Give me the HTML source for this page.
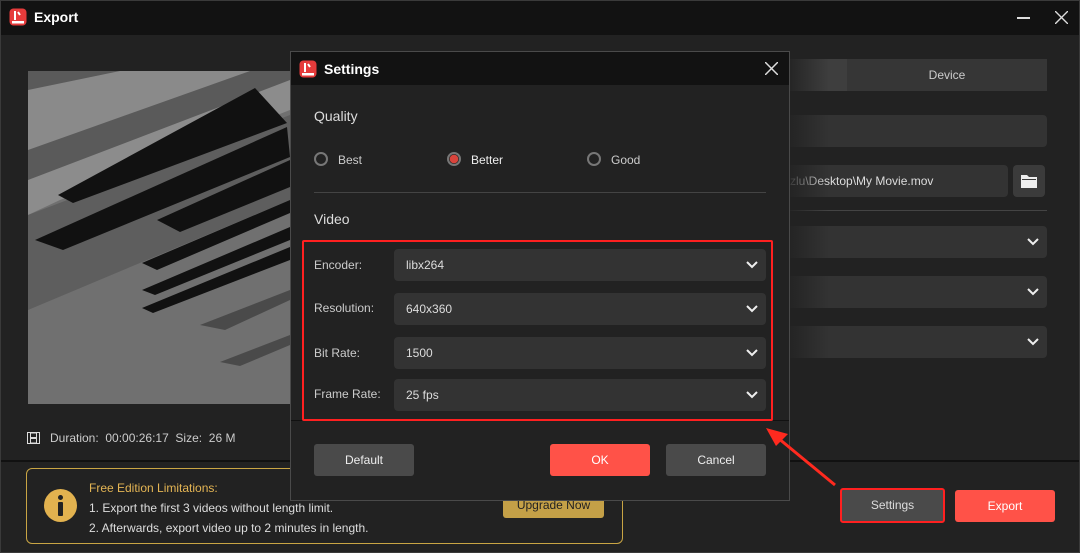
<!DOCTYPE html>
<html><head><meta charset="utf-8"><style>
*{margin:0;padding:0;box-sizing:border-box}
body{width:1080px;height:553px;background:#222;font-family:"Liberation Sans",Arial,sans-serif;color:#ddd;position:relative;overflow:hidden;font-size:12px}
.a{position:absolute}
.dd{position:absolute;background:#333;border-radius:4px}
.chev{position:absolute;right:8px;top:50%;margin-top:-5px}
.btn{position:absolute;border-radius:3px;text-align:center;color:#eee;font-size:12px}
</style></head><body>
<div class="a" style="left:0;top:0;width:1080px;height:553px;border:1px solid #3a3a3a"></div>
<div class="a" style="left:1px;top:1px;width:1078px;height:34px;background:#121212"></div>
<svg class="a" style="left:9px;top:8px" width="18" height="18" viewBox="0 0 18 18"><rect x="0.5" y="0.5" width="17" height="17" rx="4" fill="#e53b3b"/><path d="M6 3v9M9 4l2 3" stroke="#fff" stroke-width="2"/><rect x="3" y="13" width="12" height="2.5" fill="#fff"/></svg>
<div class="a" style="left:34px;top:9px;font-size:14px;font-weight:bold;color:#fff">Export</div>
<div class="a" style="left:1017px;top:17px;width:13px;height:1.5px;background:#ddd"></div>
<svg class="a" style="left:1055px;top:11px" width="13" height="13"><path d="M0 0L13 13M13 0L0 13" stroke="#ddd" stroke-width="1.4"/></svg>
<svg class="a" style="left:28px;top:71px" width="262" height="333" viewBox="28 71 262 333">
<rect x="28" y="71" width="262" height="333" fill="#707070"/>
<polygon points="28,71 290,71 290,100 28,200" fill="#5a5a5a"/>
<polygon points="28,90 120,71 250,71 28,150" fill="#8a8a8a"/>
<polygon points="28,180 290,80 290,110 60,200 28,215" fill="#8c8c8c"/>
<polygon points="28,215 290,115 290,200 28,310" fill="#5e5e5e"/>
<polygon points="58,195 255,88 287,123 73,203" fill="#111"/>
<polygon points="35,240 287,127 290,157 63,250" fill="#111"/>
<polygon points="157,220 290,160 290,187 180,232" fill="#111"/>
<polygon points="142,263 290,200 290,213 157,270" fill="#111"/>
<polygon points="142,290 290,227 290,240 155,295" fill="#111"/>
<polygon points="142,308 290,247 290,260 153,313" fill="#111"/>
<polygon points="200,325 290,290 290,300 225,330" fill="#4a4a4a"/>
<polygon points="220,362 290,335 290,345 240,366" fill="#4a4a4a"/>
</svg>
<svg class="a" style="left:27px;top:432px" width="13" height="12"><rect x="0.5" y="0.5" width="12" height="11" fill="none" stroke="#ddd"/><rect x="3" y="0" width="7" height="12" fill="#ddd"/><rect x="4" y="1.5" width="5" height="3.5" fill="#222"/><rect x="4" y="7" width="5" height="3.5" fill="#222"/></svg>
<div class="a" style="left:50px;top:431px;color:#ccc">Duration: &nbsp;00:00:26:17 &nbsp;Size: &nbsp;26 M</div>
<div class="a" style="left:1px;top:460px;width:1078px;height:2px;background:#111"></div>
<div class="a" style="left:26px;top:468px;width:597px;height:76px;border:1px solid #c9a544;border-radius:6px"></div>
<div class="a" style="left:44px;top:489px;width:33px;height:33px;border-radius:50%;background:#e2b24f"></div>
<div class="a" style="left:58px;top:495px;width:5px;height:5px;border-radius:50%;background:#222"></div>
<div class="a" style="left:58px;top:502px;width:5px;height:14px;background:#222;border-radius:1px"></div>
<div class="a" style="left:89px;top:481px;color:#e4b554">Free Edition Limitations:</div>
<div class="a" style="left:89px;top:501px;color:#ddd">1. Export the first 3 videos without length limit.</div>
<div class="a" style="left:89px;top:521px;color:#ddd">2. Afterwards, export video up to 2 minutes in length.</div>
<div class="a" style="left:503px;top:494px;width:101px;height:24px;background:#c4a047;border-radius:3px;color:#222;text-align:center;line-height:23px">Upgrade Now</div>
<div class="a" style="left:789px;top:59px;width:58px;height:32px;background:#3e3e3e"></div>
<div class="a" style="left:847px;top:59px;width:200px;height:32px;background:#363636;text-align:center;line-height:32px;color:#ccc">Device</div>
<div class="dd" style="left:780px;top:115px;width:267px;height:32px"></div>
<div class="dd" style="left:780px;top:165px;width:228px;height:32px;line-height:32px;color:#ddd;padding-left:10px">zlu\Desktop\My Movie.mov</div>
<div class="a" style="left:1013px;top:165px;width:32px;height:32px;background:#3b3b3b;border-radius:4px"></div>
<svg class="a" style="left:1021px;top:174px" width="16" height="14"><path d="M0 1h6l2 2h8v11H0z" fill="#eee"/><rect x="1" y="5" width="14" height="1" fill="#3b3b3b"/></svg>
<div class="a" style="left:789px;top:210px;width:258px;height:1px;background:#444"></div>
<div class="dd" style="left:780px;top:226px;width:267px;height:32px"><svg class="chev" width="12" height="9"><path d="M1 2l5 5 5-5" stroke="#eee" stroke-width="2" fill="none"/></svg></div>
<div class="dd" style="left:780px;top:276px;width:267px;height:32px"><svg class="chev" width="12" height="9"><path d="M1 2l5 5 5-5" stroke="#eee" stroke-width="2" fill="none"/></svg></div>
<div class="dd" style="left:780px;top:326px;width:267px;height:32px"><svg class="chev" width="12" height="9"><path d="M1 2l5 5 5-5" stroke="#eee" stroke-width="2" fill="none"/></svg></div>
<div class="a" style="left:789px;top:52px;width:40px;height:320px;background:linear-gradient(90deg,rgba(34,34,34,.9),rgba(34,34,34,0))"></div>
<div class="a" style="left:840px;top:488px;width:105px;height:35px;border:2px solid #ff2020;border-radius:3px;background:#4a4a4a;text-align:center;line-height:31px;color:#ddd">Settings</div>
<div class="btn" style="left:955px;top:490px;width:100px;height:32px;background:#ff5248;line-height:32px;color:#fff">Export</div>
<div class="a" style="left:290px;top:51px;width:500px;height:450px;background:#222;border:1px solid #4a4a4a"></div>
<div class="a" style="left:291px;top:52px;width:498px;height:33px;background:#121212"></div>
<svg class="a" style="left:299px;top:60px" width="18" height="18" viewBox="0 0 18 18"><rect x="0.5" y="0.5" width="17" height="17" rx="4" fill="#e53b3b"/><path d="M6 3v9M9 4l2 3" stroke="#fff" stroke-width="2"/><rect x="3" y="13" width="12" height="2.5" fill="#fff"/></svg>
<div class="a" style="left:324px;top:61px;font-size:14px;font-weight:bold;color:#fff">Settings</div>
<svg class="a" style="left:765px;top:62px" width="13" height="13"><path d="M0 0L13 13M13 0L0 13" stroke="#ddd" stroke-width="1.5"/></svg>
<div class="a" style="left:314px;top:108px;font-size:14px;color:#ddd">Quality</div>
<div class="a" style="left:314px;top:152px;width:14px;height:14px;border:2px solid #777;border-radius:50%"></div>
<div class="a" style="left:338px;top:153px;color:#ccc">Best</div>
<div class="a" style="left:447px;top:152px;width:14px;height:14px;border:2px solid #777;border-radius:50%;background:radial-gradient(circle,#d9443c 4px,transparent 4.5px)"></div>
<div class="a" style="left:471px;top:153px;color:#eee">Better</div>
<div class="a" style="left:587px;top:152px;width:14px;height:14px;border:2px solid #777;border-radius:50%"></div>
<div class="a" style="left:611px;top:153px;color:#ccc">Good</div>
<div class="a" style="left:314px;top:192px;width:452px;height:1px;background:#444"></div>
<div class="a" style="left:314px;top:211px;font-size:14px;color:#ddd">Video</div>
<div class="a" style="left:302px;top:240px;width:471px;height:181px;border:2px solid #ff2020;border-radius:2px"></div>
<div class="a" style="left:314px;top:258px;color:#ccc">Encoder:</div>
<div class="dd" style="left:394px;top:249px;width:372px;height:32px;line-height:32px;padding-left:12px;color:#ddd">libx264<svg class="chev" width="12" height="9"><path d="M1 2l5 5 5-5" stroke="#eee" stroke-width="2" fill="none"/></svg></div>
<div class="a" style="left:314px;top:301px;color:#ccc">Resolution:</div>
<div class="dd" style="left:394px;top:293px;width:372px;height:32px;line-height:32px;padding-left:12px;color:#ddd">640x360<svg class="chev" width="12" height="9"><path d="M1 2l5 5 5-5" stroke="#eee" stroke-width="2" fill="none"/></svg></div>
<div class="a" style="left:314px;top:346px;color:#ccc">Bit Rate:</div>
<div class="dd" style="left:394px;top:337px;width:372px;height:32px;line-height:32px;padding-left:12px;color:#ddd">1500<svg class="chev" width="12" height="9"><path d="M1 2l5 5 5-5" stroke="#eee" stroke-width="2" fill="none"/></svg></div>
<div class="a" style="left:314px;top:387px;color:#ccc">Frame Rate:</div>
<div class="dd" style="left:394px;top:379px;width:372px;height:32px;line-height:32px;padding-left:12px;color:#ddd">25 fps<svg class="chev" width="12" height="9"><path d="M1 2l5 5 5-5" stroke="#eee" stroke-width="2" fill="none"/></svg></div>
<div class="a" style="left:291px;top:420px;width:11px;height:1px;background:#111"></div>
<div class="a" style="left:773px;top:420px;width:16px;height:1px;background:#111"></div>
<div class="btn" style="left:314px;top:444px;width:100px;height:32px;background:#4a4a4a;line-height:32px">Default</div>
<div class="btn" style="left:550px;top:444px;width:100px;height:32px;background:#ff5248;line-height:32px;color:#fff">OK</div>
<div class="btn" style="left:666px;top:444px;width:100px;height:32px;background:#4a4a4a;line-height:32px">Cancel</div>
<svg class="a" style="left:760px;top:420px" width="80" height="70"><path d="M75 65L18 18" stroke="#ff2a1f" stroke-width="3"/><polygon points="6,8 28,14 16,26" fill="#ff2a1f"/></svg>
</body></html>
